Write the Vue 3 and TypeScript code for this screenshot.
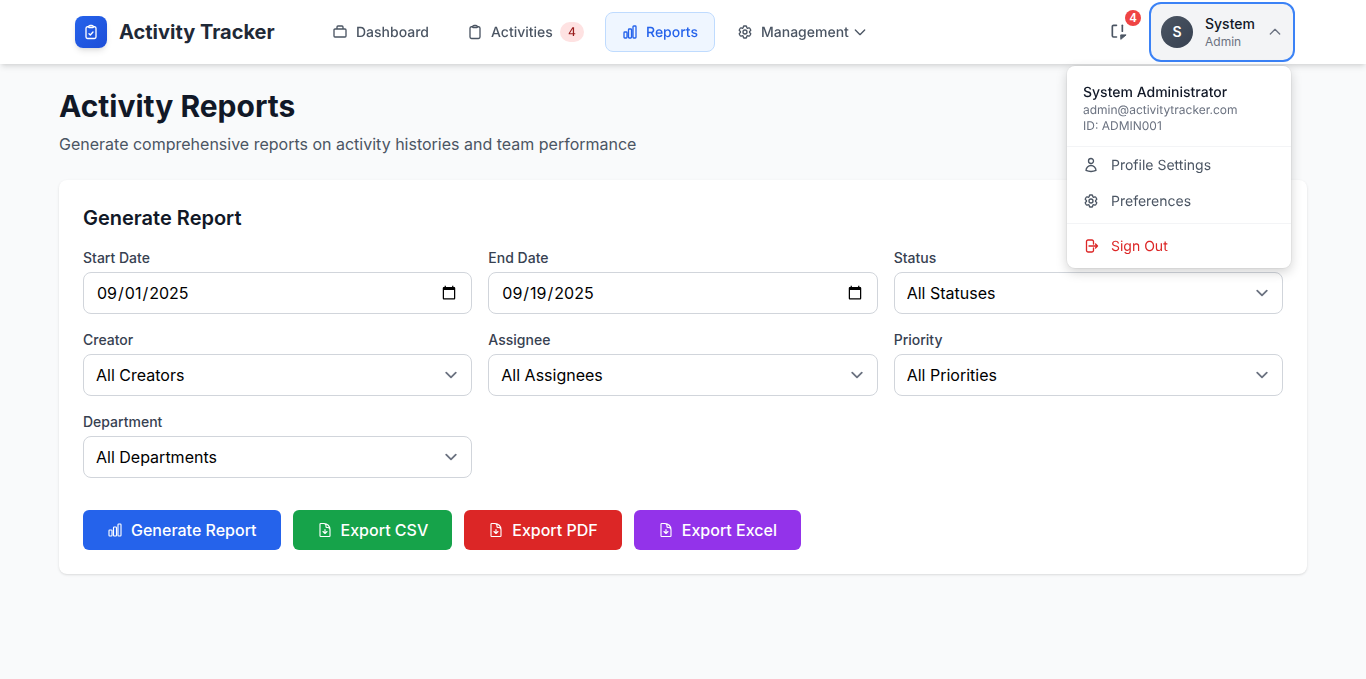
<template>
  <div class="page">
    <header class="navbar">
      <div class="nav-inner">
        <div class="brand">
          <div class="brand-logo">
            <svg viewBox="0 0 24 24" class="logo-icon" fill="none" stroke="currentColor" stroke-width="2" stroke-linecap="round" stroke-linejoin="round">
              <path :d="icons.clipboard" />
              <path d="M9 14.5l2 2 4-4.5" />
            </svg>
          </div>
          <span class="brand-name">Activity Tracker</span>
        </div>

        <nav class="nav-links">
          <a v-for="link in links" :key="link.label" class="nav-link" :class="{ active: link.active }">
            <svg viewBox="0 0 24 24" class="nav-icon" fill="none" stroke="currentColor" stroke-width="2" stroke-linecap="round" stroke-linejoin="round">
              <path v-for="d in link.paths" :key="d" :d="d" />
            </svg>
            <span>{{ link.label }}</span>
            <span v-if="link.badge" class="count">{{ link.badge }}</span>
            <svg v-if="link.caret" viewBox="0 0 24 24" class="caret" fill="none" stroke="currentColor" stroke-width="2" stroke-linecap="round" stroke-linejoin="round">
              <path d="M5 9l7 7 7-7" />
            </svg>
          </a>
        </nav>

        <div class="nav-right">
          <button class="notify">
            <svg viewBox="0 0 24 24" class="notify-icon" fill="none" stroke="currentColor" stroke-width="2" stroke-linecap="round" stroke-linejoin="round">
              <path d="M9 4H5.5A1.5 1.5 0 004 5.5v11A1.5 1.5 0 005.500 18H9" />
              <path d="M16 4v7" />
              <path d="M14.500 15.500h6l-6 5z" fill="currentColor" stroke-width="1.200" />
            </svg>
            <span class="notify-badge">4</span>
          </button>

          <div class="user">
            <button class="user-btn">
              <span class="avatar">S</span>
              <span class="user-text">
                <span class="user-name">System</span>
                <span class="user-role">Admin</span>
              </span>
              <svg viewBox="0 0 24 24" class="user-caret" fill="none" stroke="currentColor" stroke-width="2" stroke-linecap="round" stroke-linejoin="round">
                <path d="M5 15l7-7 7 7" />
              </svg>
            </button>

            <div class="user-menu">
              <div class="menu-head">
                <div class="menu-name">System Administrator</div>
                <div class="menu-sub">admin@activitytracker.com</div>
                <div class="menu-sub">ID: ADMIN001</div>
              </div>
              <div class="menu-group">
                <a class="menu-item">
                  <svg viewBox="0 0 24 24" class="menu-icon" fill="none" stroke="currentColor" stroke-width="2" stroke-linecap="round" stroke-linejoin="round">
                    <path :d="icons.user" />
                  </svg>
                  Profile Settings
                </a>
                <a class="menu-item">
                  <svg viewBox="0 0 24 24" class="menu-icon" fill="none" stroke="currentColor" stroke-width="2" stroke-linecap="round" stroke-linejoin="round">
                    <path :d="icons.cog" />
                    <path :d="icons.cogCenter" />
                  </svg>
                  Preferences
                </a>
              </div>
              <div class="menu-group signout">
                <a class="menu-item danger">
                  <svg viewBox="0 0 24 24" class="menu-icon" fill="none" stroke="currentColor" stroke-width="2" stroke-linecap="round" stroke-linejoin="round">
                    <path :d="icons.logout" />
                  </svg>
                  Sign Out
                </a>
              </div>
            </div>
          </div>
        </div>
      </div>
    </header>

    <main class="content">
      <h1>Activity Reports</h1>
      <p class="subtitle">Generate comprehensive reports on activity histories and team performance</p>

      <section class="card">
        <h2>Generate Report</h2>
        <div class="form-grid">
          <div class="field">
            <label>Start Date</label>
            <input type="date" value="2025-09-01" />
          </div>
          <div class="field">
            <label>End Date</label>
            <input type="date" value="2025-09-19" />
          </div>
          <div v-for="f in selects" :key="f.label" class="field">
            <label>{{ f.label }}</label>
            <select>
              <option>{{ f.value }}</option>
            </select>
          </div>
        </div>

        <div class="actions">
          <button v-for="b in buttons" :key="b.label" class="btn" :class="b.cls">
            <svg viewBox="0 0 24 24" class="btn-icon" fill="none" stroke="currentColor" stroke-width="1.7" stroke-linecap="round" stroke-linejoin="round">
              <path :d="b.icon" />
            </svg>
            {{ b.label }}
          </button>
        </div>
      </section>
    </main>
  </div>
</template>

<script setup lang="ts">
const icons = {
  clipboard:
    'M15.666 3.888A2.25 2.25 0 0013.5 2.25h-3c-1.03 0-1.9.693-2.166 1.638m7.332 0c.055.194.084.4.084.612v0a.75.75 0 01-.75.75H9a.75.75 0 01-.75-.75v0c0-.212.03-.418.084-.612m7.332 0c.646.049 1.288.11 1.927.184 1.1.128 1.907 1.077 1.907 2.185V19.5a2.25 2.25 0 01-2.25 2.25H6.75A2.25 2.25 0 014.5 19.5V6.257c0-1.108.806-2.057 1.907-2.185a48.208 48.208 0 011.927-.184',
  chart:
    'M3 13.125C3 12.504 3.504 12 4.125 12h2.25c.621 0 1.125.504 1.125 1.125v6.75C7.5 20.496 6.996 21 6.375 21h-2.25A1.125 1.125 0 013 19.875v-6.75zM9.75 8.625c0-.621.504-1.125 1.125-1.125h2.25c.621 0 1.125.504 1.125 1.125v11.25c0 .621-.504 1.125-1.125 1.125h-2.25a1.125 1.125 0 01-1.125-1.125V8.625zM16.5 4.125c0-.621.504-1.125 1.125-1.125h2.25C20.496 3 21 3.504 21 4.125v15.75c0 .621-.504 1.125-1.125 1.125h-2.25a1.125 1.125 0 01-1.125-1.125V4.125z',
  cog:
    'M9.594 3.94c.09-.542.56-.94 1.11-.94h2.593c.55 0 1.02.398 1.11.94l.213 1.281c.063.374.313.686.645.87.074.04.147.083.22.127.324.196.72.257 1.075.124l1.217-.456a1.125 1.125 0 011.37.49l1.296 2.247a1.125 1.125 0 01-.26 1.431l-1.003.827c-.293.24-.438.613-.431.992a6.759 6.759 0 010 .255c-.007.378.138.75.43.99l1.005.828c.424.35.534.954.26 1.43l-1.298 2.247a1.125 1.125 0 01-1.369.491l-1.217-.456c-.355-.133-.75-.072-1.076.124a6.57 6.57 0 01-.22.128c-.331.183-.581.495-.644.869l-.213 1.28c-.09.543-.56.941-1.11.941h-2.594c-.55 0-1.02-.398-1.11-.94l-.213-1.281c-.062-.374-.312-.686-.644-.87a6.52 6.52 0 01-.22-.127c-.325-.196-.72-.257-1.076-.124l-1.217.456a1.125 1.125 0 01-1.369-.49l-1.297-2.247a1.125 1.125 0 01.26-1.431l1.004-.827c.292-.24.437-.613.43-.992a6.932 6.932 0 010-.255c.007-.378-.138-.75-.43-.99l-1.004-.828a1.125 1.125 0 01-.26-1.43l1.297-2.247a1.125 1.125 0 011.37-.491l1.216.456c.356.133.751.072 1.076-.124.072-.044.146-.087.22-.128.332-.183.582-.495.644-.869l.214-1.281z',
  cogCenter: 'M15 12a3 3 0 11-6 0 3 3 0 016 0z',
  user: 'M15.75 6a3.75 3.75 0 11-7.5 0 3.75 3.75 0 017.5 0zM4.501 20.118a7.5 7.5 0 0114.998 0A17.933 17.933 0 0112 21.75c-2.676 0-5.216-.584-7.499-1.632z',
  logout:
    'M15.75 9V5.25A2.25 2.25 0 0013.5 3h-6a2.25 2.25 0 00-2.25 2.25v13.5A2.25 2.25 0 007.5 21h6a2.25 2.25 0 002.25-2.25V15m3 0l3-3m0 0l-3-3m3 3H9',
  docDown:
    'M19.5 14.25v-2.625a3.375 3.375 0 00-3.375-3.375h-1.5A1.125 1.125 0 0113.5 7.125v-1.5a3.375 3.375 0 00-3.375-3.375H8.25m.75 12l3 3m0 0l3-3m-3 3v-6m-1.5-9H5.625c-.621 0-1.125.504-1.125 1.125v17.25c0 .621.504 1.125 1.125 1.125h12.75c.621 0 1.125-.504 1.125-1.125V11.25a9 9 0 00-9-9z',
  briefcase: 'M4.500 7.500h15A1.500 1.500 0 0121 9v9a1.500 1.500 0 01-1.500 1.500h-15A1.500 1.500 0 013 18V9a1.500 1.500 0 011.500-1.500zM7.500 7.500V4.500A1.500 1.500 0 019 3h6a1.500 1.500 0 011.500 1.500v3',
}

const links = [
  { label: 'Dashboard', paths: [icons.briefcase] },
  { label: 'Activities', paths: [icons.clipboard], badge: 4 },
  { label: 'Reports', paths: [icons.chart], active: true },
  { label: 'Management', paths: [icons.cog, icons.cogCenter], caret: true },
]

const selects = [
  { label: 'Status', value: 'All Statuses' },
  { label: 'Creator', value: 'All Creators' },
  { label: 'Assignee', value: 'All Assignees' },
  { label: 'Priority', value: 'All Priorities' },
  { label: 'Department', value: 'All Departments' },
]

const buttons = [
  { label: 'Generate Report', cls: 'blue', icon: icons.chart },
  { label: 'Export CSV', cls: 'green', icon: icons.docDown },
  { label: 'Export PDF', cls: 'red', icon: icons.docDown },
  { label: 'Export Excel', cls: 'purple', icon: icons.docDown },
]
</script>

<style>
html,
body {
  margin: 0;
  background: #f9fafb;
}
</style>

<style scoped>
.page {
  min-height: 679px;
  background: #f9fafb;
  font-family: Inter, 'Liberation Sans', sans-serif;
  color: #111827;
}

.navbar {
  height: 64px;
  background: #fff;
  box-shadow: 0 4px 6px -1px rgba(0, 0, 0, 0.1), 0 2px 4px -2px rgba(0, 0, 0, 0.1);
  position: relative;
  z-index: 10;
}

.nav-inner {
  width: 1216px;
  height: 100%;
  margin: 0 auto;
  display: flex;
  align-items: center;
}

.brand {
  display: flex;
  align-items: center;
  gap: 12px;
}

.brand-logo {
  width: 32px;
  height: 32px;
  border-radius: 8px;
  background: linear-gradient(135deg, #2563eb, #1d4ed8);
  color: #fff;
  display: flex;
  align-items: center;
  justify-content: center;
  box-shadow: 0 4px 6px -1px rgba(0, 0, 0, 0.1), 0 2px 4px -2px rgba(0, 0, 0, 0.1);
}

.logo-icon {
  width: 16px;
  height: 16px;
}

.brand-name {
  font-size: 20px;
  font-weight: 700;
  color: #1f2937;
}

.nav-links {
  display: flex;
  align-items: center;
  gap: 4px;
  margin-left: 40px;
}

.nav-link {
  display: flex;
  align-items: center;
  gap: 8px;
  height: 38px;
  padding: 0 16px;
  border: 1px solid transparent;
  border-radius: 8px;
  font-size: 14px;
  font-weight: 500;
  color: #4b5563;
  text-rendering: geometricPrecision;
  will-change: transform;
}

.nav-link.active {
  background: #eff6ff;
  border-color: #bfdbfe;
  color: #2563eb;
}

.nav-icon {
  width: 16px;
  height: 16px;
  flex: none;
}

.count {
  min-width: 24px;
  height: 20px;
  padding: 0 4px;
  margin: 0 1px 0 -1px;
  box-sizing: border-box;
  border-radius: 10px;
  background: #fee2e2;
  color: #991b1b;
  font-size: 12px;
  line-height: 20px;
  text-align: center;
}

.caret {
  width: 16px;
  height: 16px;
  margin-left: -5px;
}

.nav-right {
  margin-left: auto;
  display: flex;
  align-items: center;
  gap: 12px;
}

.notify {
  position: relative;
  width: 36px;
  height: 36px;
  padding: 0;
  border: 0;
  background: none;
  color: #4b5563;
  display: flex;
  align-items: center;
  justify-content: center;
}

.notify-icon {
  width: 20px;
  height: 20px;
}

.notify-badge {
  position: absolute;
  top: -4px;
  right: -4px;
  width: 16px;
  height: 16px;
  border-radius: 50%;
  background: #ef4444;
  color: #fff;
  font-size: 12px;
  font-weight: 700;
  line-height: 16px;
  text-align: center;
}

.user {
  position: relative;
}

.user-btn {
  display: flex;
  align-items: center;
  box-sizing: border-box;
  width: 146px;
  height: 60px;
  margin-right: -4px;
  padding: 0 10px;
  border: 2px solid #3b82f6;
  border-radius: 12px;
  background: #f3f4f6;
  font-family: inherit;
}

.avatar {
  width: 32px;
  height: 32px;
  border-radius: 50%;
  background: linear-gradient(135deg, #4b5563, #374151);
  color: #fff;
  font-size: 14px;
  font-weight: 600;
  line-height: 32px;
  text-align: center;
  flex: none;
}

.user-text {
  display: flex;
  flex-direction: column;
  align-items: flex-start;
  margin-left: 12px;
}

.user-name {
  font-size: 14px;
  font-weight: 500;
  line-height: 20px;
  color: #111827;
}

.user-role {
  font-size: 12px;
  line-height: 16px;
  color: #6b7280;
}

.user-caret {
  width: 16px;
  height: 16px;
  margin-left: auto;
  color: #6b7280;
}

.user-menu {
  position: absolute;
  top: 64px;
  right: 0;
  width: 224px;
  background: #fff;
  border-radius: 8px;
  box-shadow: 0 4px 12px rgba(0, 0, 0, 0.18), 0 0 0 1px rgba(0, 0, 0, 0.04);
  text-rendering: geometricPrecision;
  will-change: transform;
}

.menu-head {
  padding: 17px 16px 12px;
  border-bottom: 1px solid #f3f4f6;
}

.menu-name {
  margin-bottom: -1px;
  font-size: 14px;
  font-weight: 500;
  line-height: 20px;
  color: #111827;
}

.menu-sub {
  font-size: 12px;
  line-height: 16px;
  color: #6b7280;
}

.menu-item {
  display: flex;
  align-items: center;
  gap: 12px;
  height: 36px;
  padding: 0 16px;
  font-size: 14px;
  color: #4b5563;
}

.menu-icon {
  width: 16px;
  height: 16px;
  flex: none;
}

.signout {
  border-top: 1px solid #f3f4f6;
  margin-top: 4px;
  padding: 4px 0;
}

.menu-item.danger {
  color: #dc2626;
}

.content {
  padding: 24px 59px 0;
}

h1 {
  margin: 0;
  font-size: 30px;
  line-height: 36px;
  font-weight: 700;
  color: #111827;
}

.subtitle {
  margin: 8px 0 24px;
  font-size: 16px;
  line-height: 24px;
  color: #4b5563;
}

.card {
  background: #fff;
  border-radius: 8px;
  padding: 24px;
  box-shadow: 0 1px 3px rgba(0, 0, 0, 0.1), 0 1px 2px -1px rgba(0, 0, 0, 0.1);
}

h2 {
  margin: 0 0 16px;
  font-size: 20px;
  line-height: 28px;
  font-weight: 600;
  color: #111827;
}

.form-grid {
  display: grid;
  grid-template-columns: repeat(3, 1fr);
  gap: 16px;
}

label {
  display: block;
  margin-bottom: 4px;
  font-size: 14px;
  font-weight: 500;
  line-height: 20px;
  color: #374151;
}

input,
select {
  display: block;
  width: 100%;
  height: 42px;
  box-sizing: border-box;
  border: 1px solid #d1d5db;
  border-radius: 8px;
  background-color: #fff;
  padding: 0 12px;
  font-family: inherit;
  font-size: 16px;
  color: #000;
}

select {
  appearance: none;
  background-image: url("data:image/svg+xml,%3csvg xmlns='http://www.w3.org/2000/svg' fill='none' viewBox='0 0 20 20'%3e%3cpath stroke='%236b7280' stroke-linecap='round' stroke-linejoin='round' stroke-width='1.5' d='M6 8l4 4 4-4'/%3e%3c/svg%3e");
  background-position: right 8px center;
  background-repeat: no-repeat;
  background-size: 24px 24px;
}

.actions {
  display: flex;
  gap: 12px;
  margin-top: 32px;
}

.btn {
  display: flex;
  align-items: center;
  gap: 8px;
  height: 40px;
  padding: 0 24px;
  border: 0;
  border-radius: 6px;
  color: #fff;
  font-family: inherit;
  font-size: 16px;
  font-weight: 500;
}

.btn-icon {
  width: 16px;
  height: 16px;
}

.blue {
  background: #2563eb;
}

.green {
  background: #16a34a;
}

.red {
  background: #dc2626;
}

.purple {
  background: #9333ea;
}
</style>
